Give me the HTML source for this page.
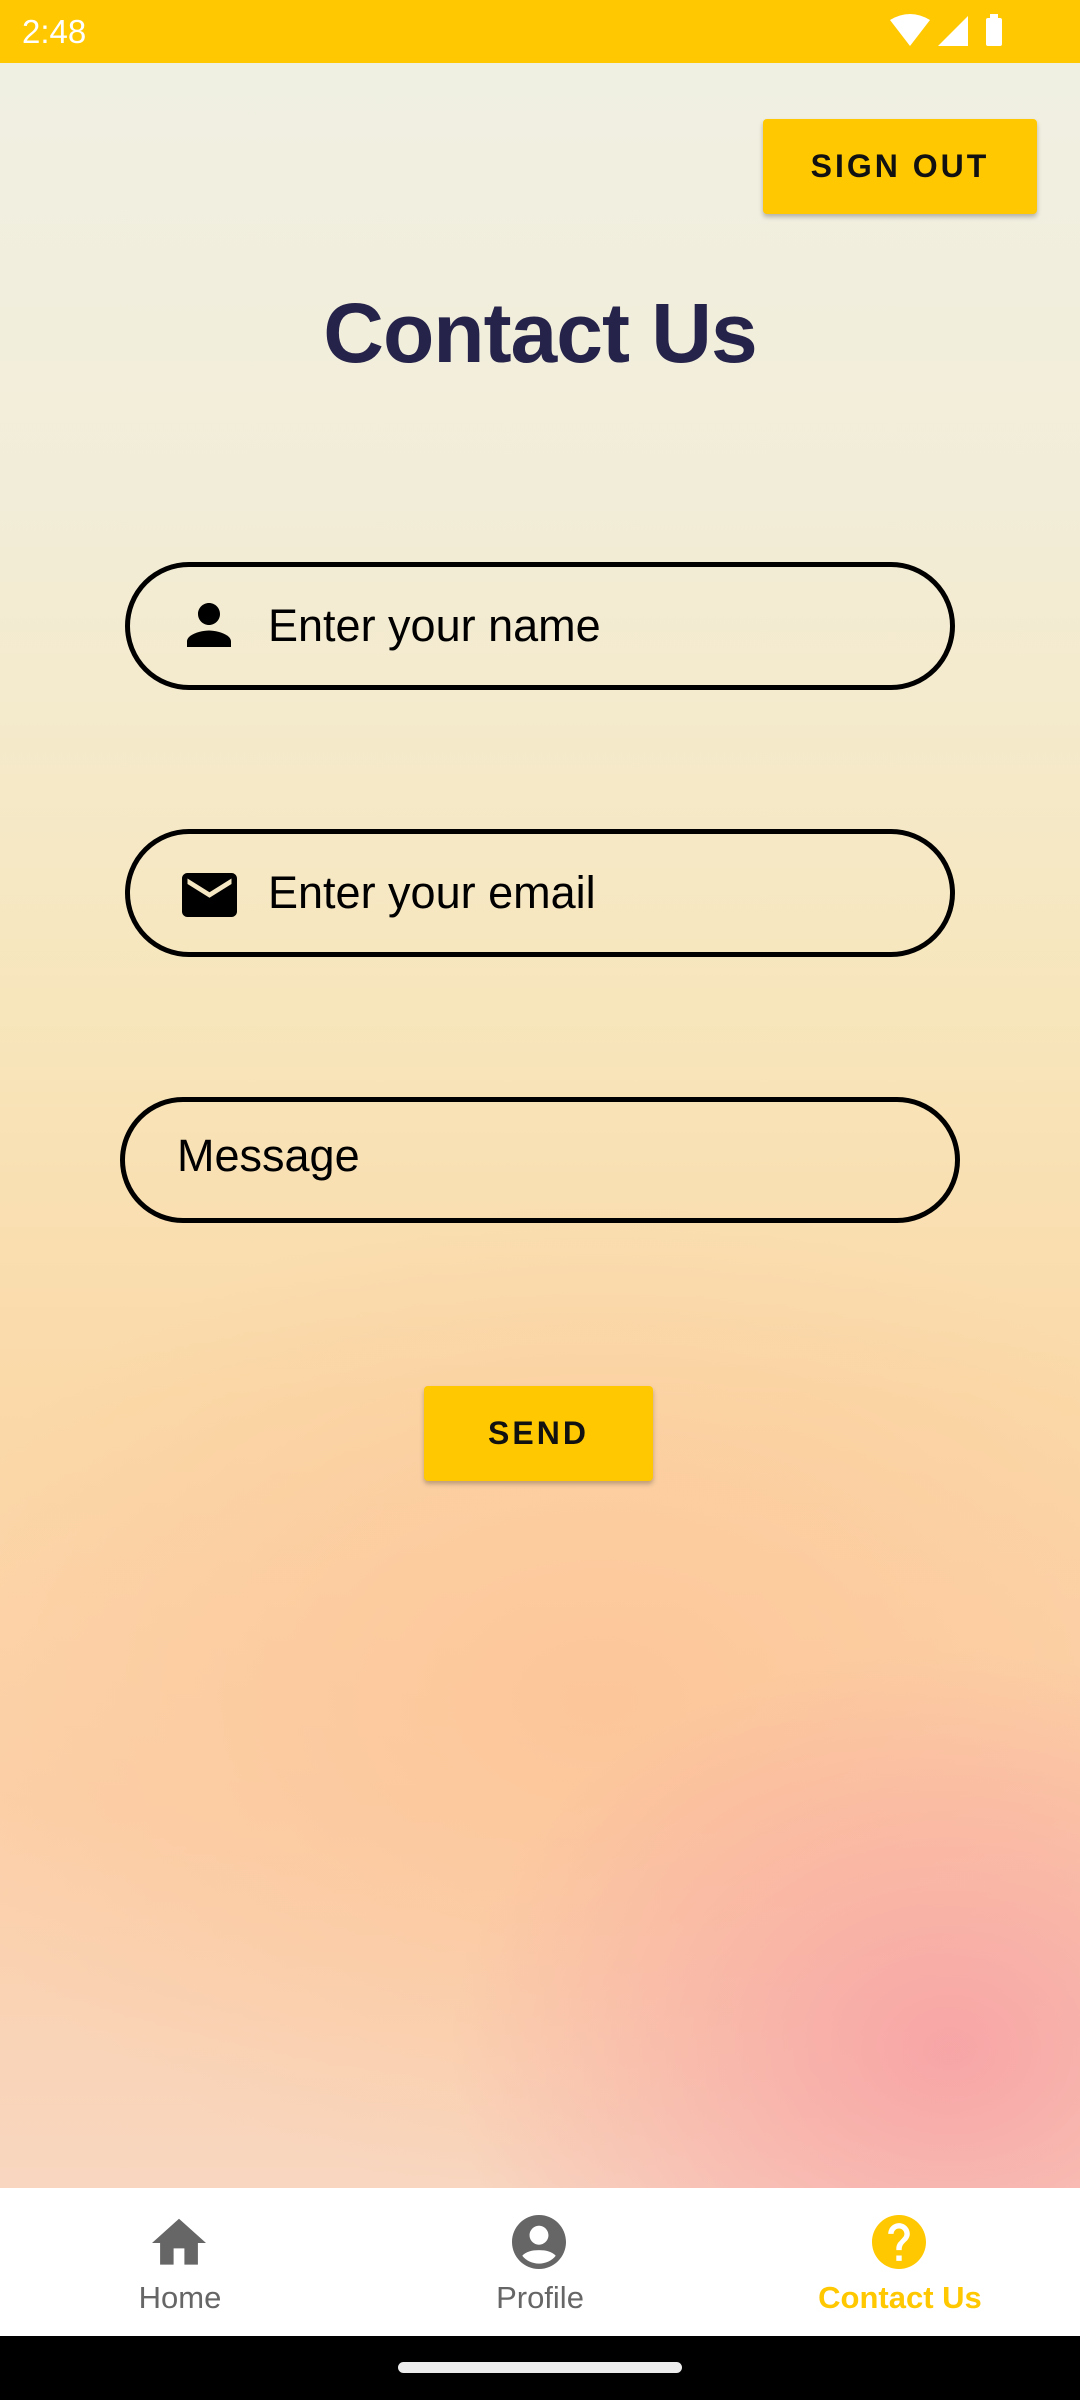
<!DOCTYPE html>
<html><head><meta charset="utf-8"><style>
*{margin:0;padding:0;box-sizing:border-box}
body{width:1080px;height:2400px;position:relative;overflow:hidden;font-family:"Liberation Sans",sans-serif;
background:
radial-gradient(ellipse 500px 400px at 950px 2050px,rgba(247,160,165,.9),rgba(247,160,165,0)),
radial-gradient(ellipse 700px 500px at 600px 1700px,rgba(252,195,150,.8),rgba(252,195,150,0)),
linear-gradient(180deg,#f0f0e4 0px,#f2edd8 500px,#f7e6bc 1000px,#fbd9a8 1400px,#fcd0a8 1800px,#f8d6c0 2190px);}
.sb{position:absolute;top:0;left:0;width:1080px;height:63px;background:#ffc800;color:#fff;font-size:33px}
.btn{position:absolute;background:#ffc800;color:#111;font-weight:bold;letter-spacing:3px;display:flex;align-items:center;justify-content:center;border-radius:4px;box-shadow:0 3px 5px rgba(0,0,0,.25)}
.field{position:absolute;border:5px solid #000;border-radius:64px;font-size:45px;color:#000}
.field span{position:absolute;top:50%;transform:translateY(-50%)}
.nav{position:absolute;top:2188px;left:0;width:1080px;height:148px;background:#fff}
.lbl{position:absolute;top:2280px;font-size:31px;color:#666;text-align:center;width:300px}
</style></head><body>
<div class="sb"><span style="position:absolute;left:22px;top:13px">2:48</span>
<svg style="position:absolute;left:888px;top:14px" width="120" height="34" viewBox="0 0 120 34">
<path d="M2 6 Q22 -6 42 6 L22 32 Z" fill="#fff"/>
<path d="M80 32 L80 2 L50 32 Z" fill="#fff"/>
<rect x="98" y="4" width="16" height="28" rx="2" fill="#fff"/><rect x="102" y="0" width="8" height="5" fill="#fff"/>
</svg></div>
<div class="btn" style="left:763px;top:119px;width:274px;height:95px;font-size:32px">SIGN OUT</div>
<div style="position:absolute;top:285px;left:0;width:1080px;text-align:center;font-size:84px;font-weight:bold;color:#26234a;letter-spacing:-1px">Contact Us</div>
<div class="field" style="left:125px;top:562px;width:830px;height:128px">
<svg style="position:absolute;left:46px;top:25px" width="66" height="66" viewBox="0 0 24 24"><path d="M12 12c2.2 0 4-1.8 4-4s-1.8-4-4-4-4 1.8-4 4 1.8 4 4 4zm0 2c-2.7 0-8 1.3-8 4v2h16v-2c0-2.7-5.3-4-8-4z"/></svg>
<span style="left:138px">Enter your name</span></div>
<div class="field" style="left:125px;top:829px;width:830px;height:128px">
<svg style="position:absolute;left:52px;top:36px" width="55" height="50" viewBox="2 3 20 18"><path d="M20 4H4c-1.1 0-2 .9-2 2v12c0 1.1.9 2 2 2h16c1.1 0 2-.9 2-2V6c0-1.1-.9-2-2-2zm0 4l-8 5-8-5V6l8 5 8-5v2z"/></svg>
<span style="left:138px">Enter your email</span></div>
<div class="field" style="left:120px;top:1097px;width:840px;height:126px"><span style="left:52px;top:54px">Message</span></div>
<div class="btn" style="left:424px;top:1386px;width:229px;height:95px;font-size:32px">SEND</div>
<div class="nav"></div>
<svg style="position:absolute;left:152px;top:2218px" width="54" height="50" viewBox="2 3 20 18"><path d="M10 20v-6h4v6h5v-8h3L12 3 2 12h3v8z" fill="#666"/></svg>
<svg style="position:absolute;left:512px;top:2215px" width="54" height="54" viewBox="2 2 20 20"><path fill="#666" d="M12 2C6.5 2 2 6.5 2 12s4.5 10 10 10 10-4.5 10-10S17.5 2 12 2zm0 4c1.9 0 3.5 1.6 3.5 3.5S13.9 13 12 13s-3.5-1.6-3.5-3.5S10.1 6 12 6zm0 14c-2.5 0-4.8-1.1-6.2-2.9C7.2 15.5 9.5 15 12 15s4.8.5 6.2 2.1C16.8 18.9 14.5 20 12 20z"/></svg>
<svg style="position:absolute;left:872px;top:2215px" width="54" height="54" viewBox="2 2 20 20"><path fill="#ffc800" d="M12 2C6.5 2 2 6.5 2 12s4.5 10 10 10 10-4.5 10-10S17.5 2 12 2zm1 17h-2v-2h2v2zm2.1-7.7l-.9.9C13.5 12.9 13 13.5 13 15h-2v-.5c0-1.1.4-2.1 1.2-2.8l1.2-1.3c.4-.4.6-.9.6-1.4 0-1.1-.9-2-2-2s-2 .9-2 2H8c0-2.2 1.8-4 4-4s4 1.8 4 4c0 .9-.4 1.7-.9 2.3z"/></svg>
<div class="lbl" style="left:30px">Home</div>
<div class="lbl" style="left:390px">Profile</div>
<div class="lbl" style="left:750px;color:#ffc800;font-weight:bold">Contact Us</div>
<div style="position:absolute;top:2336px;left:0;width:1080px;height:64px;background:#000"></div>
<div style="position:absolute;top:2362px;left:398px;width:284px;height:11px;border-radius:6px;background:#ececec"></div>
</body></html>
